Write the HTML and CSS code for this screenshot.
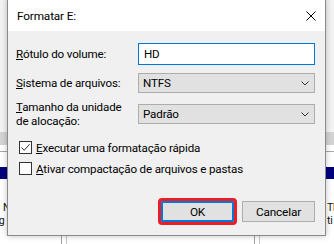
FILE: index.html
```html
<!DOCTYPE html>
<html lang="pt-BR">
<head>
<meta charset="utf-8">
<title>Formatar E:</title>
<link rel="stylesheet" href="styles.css">
</head>
<body>
<div class="screen">
  <div class="backdrop">
    <div class="band-top"></div>
    <div class="band-toolbar"></div>
    <div class="band-white"></div>
    <div class="band-line"></div>
    <div class="band-white2"></div>
    <div class="band-sel"></div>
    <div class="band-list">
      <div class="list-left">
        <div class="ln1">NTFS</div>
        <div class="ln2">Reg</div>
      </div>
      <div class="list-right">
        <div class="ln1">Th</div>
        <div class="ln2">ti</div>
      </div>
    </div>
    <div class="band-cols">
      <div class="col c1"></div>
      <div class="col c2"></div>
      <div class="col c3"></div>
      <div class="col c4"></div>
    </div>
  </div>

  <div class="dialog">
    <div class="titlebar">
      <span class="title">Formatar E:</span>
      <svg class="close" width="10" height="10" viewBox="0 0 10 10"><path d="M0.5 0.5 L9.5 9.5 M9.5 0.5 L0.5 9.5" stroke="#000" stroke-width="1" fill="none"/></svg>
    </div>
    <div class="body">
      <div class="form">
        <label class="lbl"><u>R</u>ótulo do volume:</label>
        <div class="input">HD</div>
        <label class="lbl"><u>S</u>istema de arquivos:</label>
        <div class="select"><span>NTFS</span><svg class="chev" width="8" height="5" viewBox="0 0 8 5"><path d="M0.5 0.5 L4 4 L7.5 0.5" stroke="#333" fill="none"/></svg></div>
        <label class="lbl lbl2"><u>T</u>amanho da unidade<br>de alocação:</label>
        <div class="select"><span>Padrão</span><svg class="chev" width="8" height="5" viewBox="0 0 8 5"><path d="M0.5 0.5 L4 4 L7.5 0.5" stroke="#333" fill="none"/></svg></div>
      </div>
      <div class="checks">
        <div class="check">
          <span class="box"><svg width="11" height="11" viewBox="0 0 11 11"><path d="M1.5 5.5 L4.2 8.3 L9.6 2.2" stroke="#333" stroke-width="1" fill="none"/></svg></span>
          <span><u>E</u>xecutar uma formatação rápida</span>
        </div>
        <div class="check">
          <span class="box"></span>
          <span><u>A</u>tivar compactação de arquivos e pastas</span>
        </div>
      </div>
      <div class="buttons">
        <button class="btn btn-ok">OK</button>
        <button class="btn">Cancelar</button>
      </div>
    </div>
  </div>
</div>
</body>
</html>
```
FILE: styles.css
```css
* { box-sizing: border-box; }
html, body { margin: 0; padding: 0; }
body {
  width: 334px;
  height: 244px;
  overflow: hidden;
  font-family: Roboto, "Liberation Sans", sans-serif;
  font-size: 11.6px;
  letter-spacing: -0.15px;
  color: #000;
}
.screen {
  position: relative;
  width: 334px;
  height: 244px;
  overflow: hidden;
  background: #fff;
}
.backdrop { display: flex; flex-direction: column; }
.band-top { height: 132px; background: #f3f3f3; }
.band-toolbar { height: 13px; background: #d4d4d4; }
.band-white { height: 6px; background: #fff; }
.band-line { height: 1px; background: #a7a7a7; }
.band-white2 { height: 15px; background: #fff; }
.band-sel { height: 12px; background: #000080; }
.band-list {
  height: 50px;
  display: flex;
  justify-content: space-between;
  padding-top: 22px;
  line-height: 13px;
  font-size: 10.5px;
  color: #111;
}
.list-left { width: 40px; overflow: hidden; white-space: nowrap; }
.list-left .ln1 { padding-left: 3px; }
.list-left .ln2 { margin-left: -13px; }
.list-right { width: 7px; overflow: hidden; white-space: nowrap; }
.band-cols { display: flex; height: 20px; }
.col { height: 20px; }
.c1 { width: 62px; border-right: 1px solid #a0a0a0; }
.c2 { width: 5px; border-right: 1px solid #c8c8c8; }
.c3 { width: 188px; border-right: 1px solid #a0a0a0; }
.c4 { width: 5px; border-right: 1px solid #c8c8c8; }

.dialog {
  position: absolute;
  left: 7px;
  top: -1px;
  width: 319px;
  height: 237px;
  border: 1px solid #8a8a8a;
  background: #f0f0f0;
  box-shadow: 0 0 6px rgba(0,0,0,0.25);
  display: flex;
  flex-direction: column;
}
.titlebar {
  height: 31px;
  background: #fff;
  display: flex;
  align-items: center;
  justify-content: space-between;
  padding: 1px 9px 0 9px;
}
.title { font-size: 11.8px; }
.close { display: block; }
.body {
  flex: 1;
  padding: 12px 10px 13px 8px;
  display: flex;
  flex-direction: column;
}
.form {
  display: grid;
  grid-template-columns: 122px 177px;
  row-gap: 7px;
  align-items: center;
}
.lbl { line-height: 14px; }
.lbl2 { align-self: start; }
.form > :nth-child(3) { margin-top: 1px; }
.input {
  height: 22px;
  border: 1px solid #0078d7;
  background: #fff;
  padding-left: 5px;
  display: flex;
  align-items: center;
}
.select {
  height: 20px;
  border: 1px solid #adadad;
  background: #e1e1e1;
  display: flex;
  align-items: center;
  justify-content: space-between;
  padding: 0 5px 0 4px;
}
.form > .select:nth-of-type(2) { margin-top: 1px; }
.chev { display: block; }
.checks {
  margin-top: 13px;
  padding-left: 3px;
  display: flex;
  flex-direction: column;
  gap: 8px;
}
.check { display: flex; align-items: center; gap: 4px; height: 13px; }
.box {
  width: 13px;
  height: 13px;
  border: 1px solid #333;
  background: #fff;
  display: flex;
  align-items: center;
  justify-content: center;
}
.box svg { display: block; }
.buttons {
  margin-top: auto;
  display: flex;
  justify-content: flex-end;
  gap: 8px;
}
.btn {
  width: 73px;
  height: 21px;
  border: 1px solid #adadad;
  background: #e1e1e1;
  font-family: inherit;
  font-size: 11.8px;
  letter-spacing: inherit;
  color: #000;
  padding: 0;
}
.btn-ok {
  border: 2px solid #0078d7;
  outline: 3px solid #ee1c24;
  outline-offset: 0;
  border-radius: 1px;
}
```
